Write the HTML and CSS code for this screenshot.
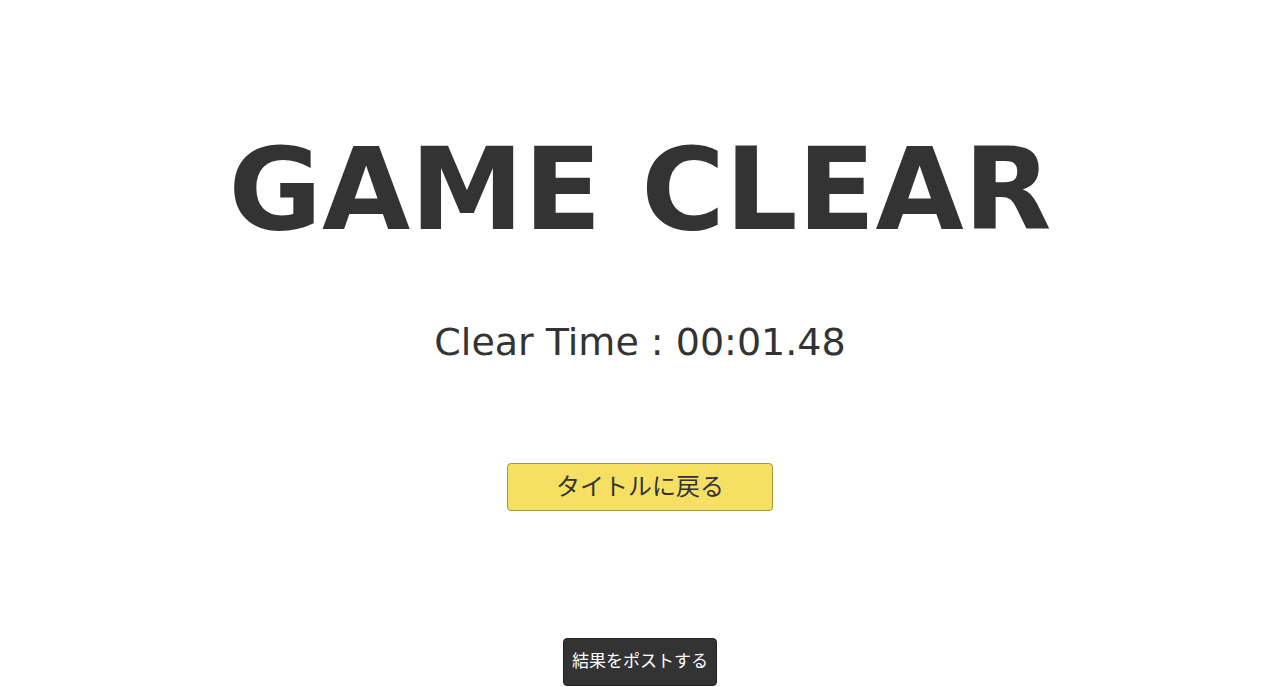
FILE: index.html
```html
<!DOCTYPE html>
<html lang="ja">
<head>
<meta charset="utf-8">
<title>GAME CLEAR</title>
<link rel="stylesheet" href="styles.css">
</head>
<body>
<main class="screen">
  <h1 class="title">GAME CLEAR</h1>
  <p class="time">Clear Time : 00:01.48</p>
  <button class="btn-back" type="button">タイトルに戻る</button>
  <button class="btn-post" type="button">結果をポストする</button>
</main>
</body>
</html>
```
FILE: styles.css
```css
html, body {
  margin: 0;
  padding: 0;
  background: #ffffff;
}
body {
  font-family: "DejaVu Sans", Verdana, "Noto Sans CJK JP", sans-serif;
  color: #333333;
  height: 687px;
  overflow: hidden;
}
.screen {
  display: flex;
  flex-direction: column;
  align-items: center;
}
.title {
  margin: 118px 0 0;
  font-size: 114px;
  font-weight: bold;
  line-height: 144px;
  letter-spacing: 0;
}
.time {
  margin: 56px 0 0;
  font-size: 38px;
  line-height: 48px;
}
.btn-back {
  margin-top: 97px;
  width: 266px;
  height: 48px;
  background: #f5e063;
  border: 1px solid #a8963a;
  border-radius: 4px;
  font-family: "DejaVu Sans", "Noto Sans CJK JP", sans-serif;
  font-size: 24px;
  color: #333333;
  padding: 0 0 6px;
}
.btn-post {
  margin-top: 127px;
  width: 154px;
  height: 48px;
  background: #333333;
  border: 1px solid #222222;
  border-radius: 4px;
  font-family: "DejaVu Sans", "Noto Sans CJK JP", sans-serif;
  font-size: 17px;
  color: #ffffff;
  padding: 0 0 5px;
}
```
